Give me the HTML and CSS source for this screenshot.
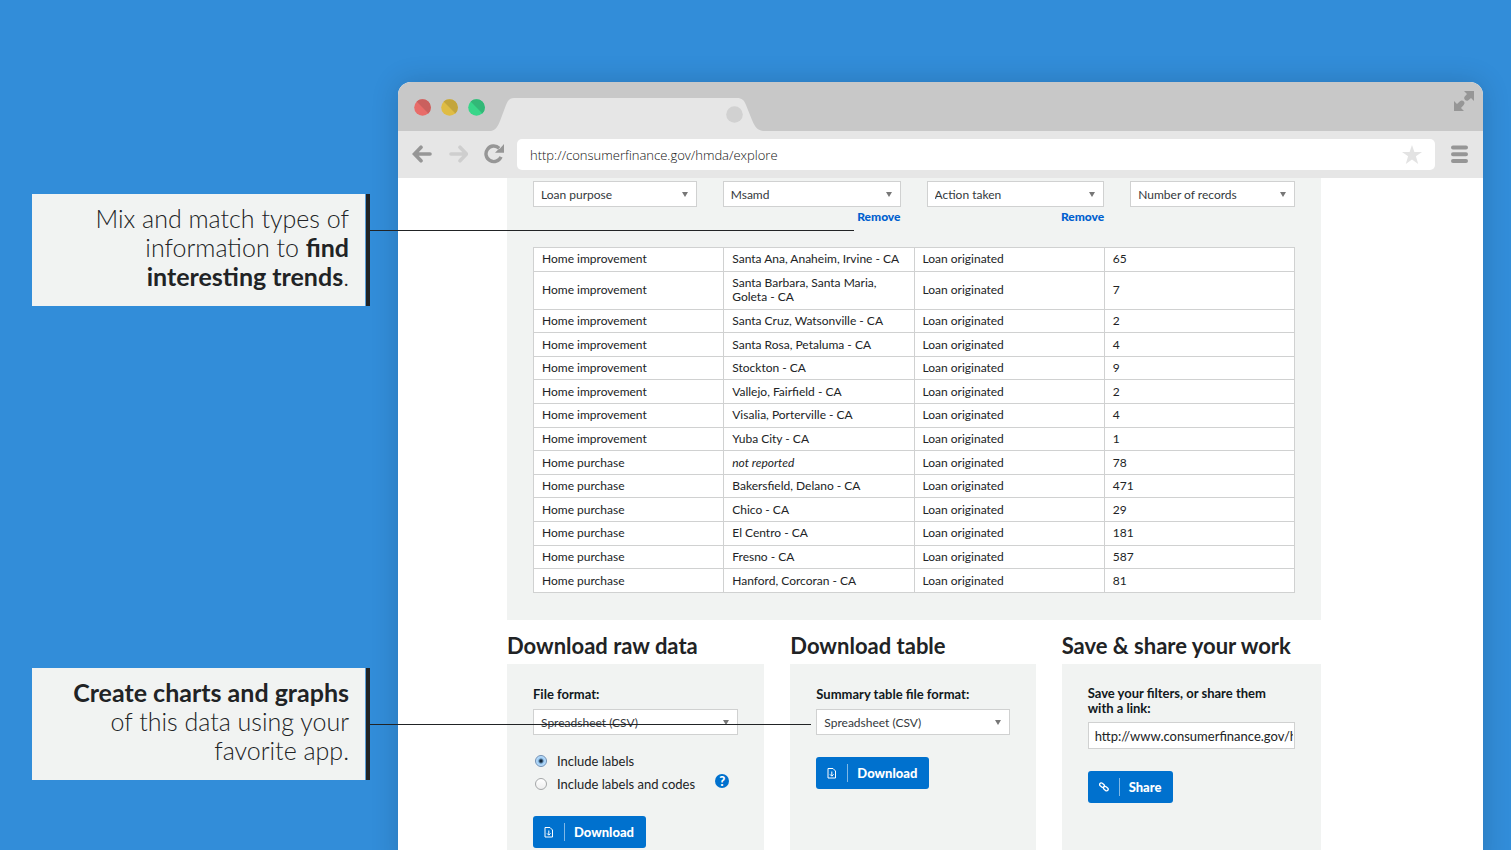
FILE: index.html
```html
<!DOCTYPE html>
<html lang="en">
<head>
<meta charset="utf-8">
<title>Explore the data</title>
<link rel="stylesheet" href="styles.css">
</head>
<body>
<div class="stage">
  <aside class="notes">
    <p class="note note-mix">Mix and match types of<br>information to <strong>find<br>interesting trends</strong>.</p>
    <p class="note note-charts"><strong>Create charts and graphs</strong><br>of this data using your<br>favorite app.</p>
  </aside>

  <div class="browser">
    <header class="titlebar">
      <div class="lights">
        <svg width="17" height="17" viewBox="0 0 17 17"><circle cx="8.500" cy="8.500" r="8.300" fill="#e86c69"/><path d="M2.600 2.600A8.300 8.300 0 0 1 14.400 14.400Z" fill="#ca605e"/></svg>
        <svg width="17" height="17" viewBox="0 0 17 17"><circle cx="8.500" cy="8.500" r="8.300" fill="#dfbc44"/><path d="M2.600 2.600A8.300 8.300 0 0 1 14.400 14.400Z" fill="#c3a53c"/></svg>
        <svg width="17" height="17" viewBox="0 0 17 17"><circle cx="8.500" cy="8.500" r="8.300" fill="#38d689"/><path d="M2.600 2.600A8.300 8.300 0 0 1 14.400 14.400Z" fill="#32b877"/></svg>
      </div>
      <svg class="tab" width="274" height="33" viewBox="0 0 274 33">
        <path d="M0 33C5 32 7 28 9 23L15 7C17 2 19 0 23 0H246C251 0 253 2 255 7L261 22C264 29 266 32 272 33Z" fill="#e6e6e6"/>
        <circle cx="243.500" cy="16.500" r="8.300" fill="#d1d1d1"/>
      </svg>
      <svg class="expand" width="20" height="20" viewBox="0 0 20 20" fill="#969696"><path d="M10 0H20V10L17 7L14 9.500A2.800 2.800 0 0 1 10.300 6L13 3ZM0 20V10L3 13L6 10.300A2.600 2.600 0 0 1 9.700 14L7 17L10 20Z"/></svg>
    </header>

    <div class="toolbar">
      <button class="nav" aria-label="Back"><svg width="20" height="19" viewBox="0 0 20 19" fill="none" stroke="#969696" stroke-width="3.600" stroke-linecap="round"><path d="M3 9H18M9 2.200L2.500 9L9 15.800"/></svg></button>
      <button class="nav" aria-label="Forward"><svg width="20" height="19" viewBox="0 0 20 19" fill="none" stroke="#cecece" stroke-width="3.600" stroke-linecap="round"><path d="M18 9H3M12 2.200L18.500 9L12 15.800"/></svg></button>
      <button class="nav" aria-label="Reload"><svg width="20" height="21" viewBox="0 0 20 21"><path d="M17 12.800A7.800 7.800 0 1 1 15.200 4.200" fill="none" stroke="#969696" stroke-width="3.400"/><path d="M20 0V8.800H11L14.500 5.300L16 4.500Z" fill="#969696"/></svg></button>
      <div class="address">
        <input type="text" aria-label="Address" value="http://consumerfinance.gov/hmda/explore">
        <svg width="20" height="19" viewBox="0 0 20 19"><path d="M10 0L12.400 7H20L13.900 11.300L16.200 19L10 14.400L3.800 19L6.100 11.300L0 7H7.600Z" fill="#e3e3e3"/></svg>
      </div>
      <button class="nav" aria-label="Menu"><svg width="17" height="19" viewBox="0 0 17 19" stroke="#969696" stroke-width="4" stroke-linecap="round"><path d="M2 2.500H15M2 9.300H15M2 16.100H15"/></svg></button>
    </div>

    <main class="page">
      <section class="results">
        <div class="filters">
          <div class="filter"><span class="pick"><select aria-label="First column"><option>Loan purpose</option></select></span></div>
          <div class="filter"><span class="pick"><select aria-label="Second column"><option>Msamd</option></select></span><a class="remove" href="#">Remove</a></div>
          <div class="filter"><span class="pick"><select aria-label="Third column"><option>Action taken</option></select></span><a class="remove" href="#">Remove</a></div>
          <div class="filter"><span class="pick"><select aria-label="Value"><option>Number of records</option></select></span></div>
        </div>
        <table class="records">
          <tbody>
            <tr><td>Home improvement</td><td>Santa Ana, Anaheim, Irvine - CA</td><td>Loan originated</td><td>65</td></tr>
            <tr><td>Home improvement</td><td>Santa Barbara, Santa Maria,<br>Goleta - CA</td><td>Loan originated</td><td>7</td></tr>
            <tr><td>Home improvement</td><td>Santa Cruz, Watsonville - CA</td><td>Loan originated</td><td>2</td></tr>
            <tr><td>Home improvement</td><td>Santa Rosa, Petaluma - CA</td><td>Loan originated</td><td>4</td></tr>
            <tr><td>Home improvement</td><td>Stockton - CA</td><td>Loan originated</td><td>9</td></tr>
            <tr><td>Home improvement</td><td>Vallejo, Fairfield - CA</td><td>Loan originated</td><td>2</td></tr>
            <tr><td>Home improvement</td><td>Visalia, Porterville - CA</td><td>Loan originated</td><td>4</td></tr>
            <tr><td>Home improvement</td><td>Yuba City - CA</td><td>Loan originated</td><td>1</td></tr>
            <tr><td>Home purchase</td><td><em>not reported</em></td><td>Loan originated</td><td>78</td></tr>
            <tr><td>Home purchase</td><td>Bakersfield, Delano - CA</td><td>Loan originated</td><td>471</td></tr>
            <tr><td>Home purchase</td><td>Chico - CA</td><td>Loan originated</td><td>29</td></tr>
            <tr><td>Home purchase</td><td>El Centro - CA</td><td>Loan originated</td><td>181</td></tr>
            <tr><td>Home purchase</td><td>Fresno - CA</td><td>Loan originated</td><td>587</td></tr>
            <tr><td>Home purchase</td><td>Hanford, Corcoran - CA</td><td>Loan originated</td><td>81</td></tr>
          </tbody>
        </table>
      </section>

      <div class="actions">
        <section class="action">
          <h2>Download raw data</h2>
          <div class="panel">
            <label class="label" for="raw-format">File format:</label>
            <span class="pick"><select id="raw-format"><option>Spreadsheet (CSV)</option></select></span>
            <div class="choices">
              <label class="choice"><input type="radio" name="codes" checked>Include labels</label>
              <div class="choice-row">
                <label class="choice"><input type="radio" name="codes">Include labels and codes</label>
                <button class="help" aria-label="Help">?</button>
              </div>
            </div>
            <button class="button"><svg width="10" height="11" viewBox="0 0 10 11" fill="none" stroke="#fff"><path d="M1 .5H6L8.500 3V10H1Z"/><path d="M4.800 3.500V8M3 6.400L4.800 8.200L6.600 6.400"/></svg><span>Download</span></button>
          </div>
        </section>
        <section class="action">
          <h2>Download table</h2>
          <div class="panel">
            <label class="label" for="table-format">Summary table file format:</label>
            <span class="pick"><select id="table-format"><option>Spreadsheet (CSV)</option></select></span>
            <button class="button"><svg width="10" height="11" viewBox="0 0 10 11" fill="none" stroke="#fff"><path d="M1 .5H6L8.500 3V10H1Z"/><path d="M4.800 3.500V8M3 6.400L4.800 8.200L6.600 6.400"/></svg><span>Download</span></button>
          </div>
        </section>
        <section class="action">
          <h2>Save &amp; share your work</h2>
          <div class="panel">
            <label class="label label-long" for="share-link">Save your filters, or share them<br>with a link:</label>
            <input class="link-box" id="share-link" type="text" value="http://www.consumerfinance.gov/hmda/explore">
            <button class="button"><svg width="10" height="10" viewBox="0 0 10 10" fill="none" stroke="#fff" stroke-width="1.300"><rect x="-2.600" y="-1.600" width="5.200" height="3.200" rx="1.600" transform="translate(3 3.200) rotate(40)"/><rect x="-2.600" y="-1.600" width="5.200" height="3.200" rx="1.600" transform="translate(6.800 6.600) rotate(40)"/></svg><span>Share</span></button>
          </div>
        </section>
      </div>
    </main>
  </div>
</div>
</body>
</html>
```
FILE: styles.css
```css
* {
  box-sizing: border-box;
}

body {
  margin: 0;
  background: #328dd9;
  color: #212325;
  font-family: Lato, "Open Sans", sans-serif;
  font-size: 12px;
}

button,
input,
select {
  font: inherit;
  color: inherit;
  margin: 0;
}

.stage {
  display: grid;
  grid-template-columns: 338px 1fr;
  gap: 28px;
  height: 100vh;
  overflow: hidden;
  padding: 82px 28px 0 32px;
}

/* Annotations */
.notes {
  padding-top: 112px;
}

.note {
  position: relative;
  margin: 0;
  padding: 10px 17px 15px;
  border-right: 4px solid #212325;
  background: #f1f3f2;
  box-shadow: inset -1px 0 #5a9fd8;
  font-size: 25px;
  font-weight: 300;
  line-height: 29px;
  text-align: right;
}

.note + .note {
  margin-top: 362px;
}

.note strong {
  font-weight: 700;
}

.note::after {
  content: "";
  position: absolute;
  z-index: 1;
  left: 100%;
  height: 1px;
  background: #212325;
}

.note-mix::after {
  top: 36px;
  width: 488px;
}

.note-charts::after {
  top: 56px;
  width: 445px;
}

/* Browser frame */
.browser {
  min-width: 0;
  border-radius: 13px 13px 0 0;
  background: #fff;
  box-shadow: 0 0 28px rgba(0, 0, 0, 0.16);
}

.titlebar {
  display: flex;
  align-items: flex-end;
  height: 49px;
  padding: 0 9px 0 16px;
  border-radius: 13px 13px 0 0;
  background: #c8c8c8;
}

.lights {
  display: flex;
  gap: 10px;
  padding-bottom: 15px;
}

.tab {
  margin-left: 6px;
}

.expand {
  margin: 0 0 20px auto;
}

.titlebar svg,
.nav svg {
  display: block;
}

.toolbar {
  display: flex;
  align-items: center;
  gap: 16px;
  height: 47px;
  padding: 0 15px 0 14px;
  background: #e6e6e6;
}

.nav {
  padding: 0;
  border: 0;
  background: none;
}

.address {
  flex: 1;
  display: flex;
  align-items: center;
  height: 31px;
  margin-left: -3px;
  padding: 0 13px;
  border-radius: 5px;
  background: #fff;
}

.address input {
  flex: 1;
  border: 0;
  padding: 0;
  outline: 0;
  background: none;
  color: #111;
  font-family: "Open Sans", "Noto Sans", sans-serif;
  font-size: 13px;
  font-weight: 300;
}

/* Page */
.page {
  padding: 0 162px 0 109px;
}

.results {
  padding: 3px 26px 27px;
  background: #f1f3f2;
}

.filters {
  display: grid;
  grid-template-columns: 164fr 178fr 178fr 165fr;
  gap: 26px;
  height: 66px;
}

.filter {
  display: flex;
  flex-direction: column;
}

.pick {
  position: relative;
  display: block;
}

.pick::after {
  content: "";
  position: absolute;
  top: 11px;
  right: 9px;
  border: 3px solid transparent;
  border-top: 5px solid #777;
  border-bottom: 0;
  pointer-events: none;
}

.pick select {
  appearance: none;
  display: block;
  width: 100%;
  height: 26px;
  padding: 0 20px 0 7px;
  border: 1px solid #d0d1d1;
  border-radius: 0;
  background: #fff;
  color: #34383c;
}

.remove {
  align-self: flex-end;
  margin-top: 2px;
  color: #0060cf;
  font-weight: 900;
  line-height: 16px;
  text-decoration: none;
}

.records {
  width: 100%;
  height: 346px;
  table-layout: fixed;
  border-collapse: collapse;
  background: #fff;
  line-height: 14px;
}

.records td {
  padding: 4px 8px;
  border: 1px solid #d0d1d1;
}

/* Download and share */
.actions {
  display: grid;
  grid-template-columns: 257fr 245fr 259fr;
  gap: 26px;
}

.action {
  display: flex;
  flex-direction: column;
  min-width: 0;
}

.action h2 {
  margin: 12px 0 4px;
  font-size: 22px;
  font-weight: 700;
  line-height: 28px;
  white-space: nowrap;
}

.panel {
  flex: 1;
  padding: 22px 26px;
  background: #f1f3f2;
}

.label {
  display: block;
  margin-bottom: 6px;
  color: #101820;
  font-size: 13px;
  font-weight: 700;
  line-height: 17px;
  white-space: nowrap;
}

.label-long {
  line-height: 15px;
}

.choices {
  margin: 14px 0 -1px;
  font-size: 13px;
}

.choice-row {
  display: flex;
  justify-content: space-between;
  padding-right: 9px;
}

.choice {
  display: flex;
  align-items: center;
  gap: 10px;
  height: 23px;
}

.choice input {
  appearance: none;
  width: 12px;
  height: 12px;
  margin-left: 2px;
  border: 1px solid #a5a7a8;
  border-radius: 50%;
  background: linear-gradient(#fff, #eee);
}

.choice input:checked {
  border-color: #6f8fb5;
  background: radial-gradient(circle, #14283c 1px, #9dccf5 3px, #cfeaff 6px);
}

.help {
  width: 14px;
  height: 14px;
  margin-top: 2px;
  padding: 0;
  border: 0;
  border-radius: 50%;
  background: #0071ce;
  color: #fff;
  font-size: 13px;
  font-weight: 900;
  line-height: 14px;
}

.link-box {
  display: block;
  width: 100%;
  height: 27px;
  padding: 0 1px 0 6px;
  border: 1px solid #d0d1d1;
  background: #fff;
  font-size: 13px;
}

.button {
  display: flex;
  align-items: center;
  gap: 10px;
  height: 32px;
  margin-top: 22px;
  padding: 0 12px 0 11px;
  border: 0;
  border-radius: 3px;
  background: #0071ce;
  color: #fff;
  font-size: 13px;
  font-weight: 900;
}

.button span {
  padding-left: 9px;
  border-left: 1px solid #7fb8e6;
  line-height: 18px;
}
```
